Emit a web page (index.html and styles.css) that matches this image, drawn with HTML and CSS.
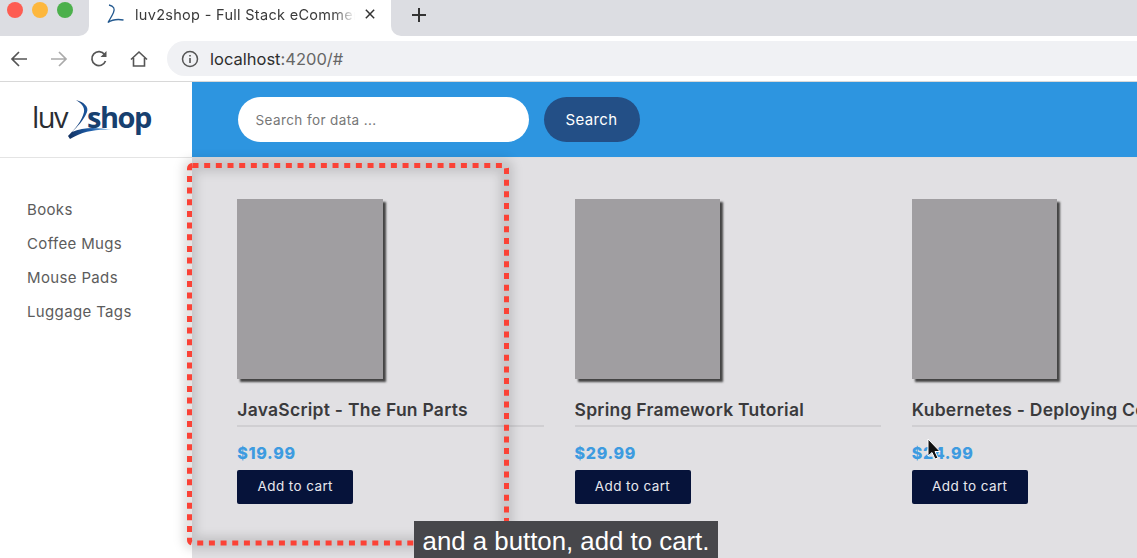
FILE: index.html
```html
<!DOCTYPE html>
<html lang="en">
<head>
  <meta charset="UTF-8" />
  <title>luv2shop - Full Stack eCommerce</title>
  <link rel="stylesheet" href="styles.css">
</head>
<body>
  <div class="tabbar">
    <div class="tab-left">
      <span class="light red"></span>
      <span class="light yellow"></span>
      <span class="light green"></span>
    </div>
    <div class="tab">
      <svg class="favicon" width="20" height="24" viewBox="0 0 20 24">
        <path d="M4 3C9 4 10 7 8.5 10.5C7 14 5 17 3 20.5C8 17 13 17 18.5 18" fill="none" stroke="#23598f" stroke-width="1.3"/>
      </svg>
      <span class="tab-title">luv2shop - Full Stack eCommerce</span>
      <svg class="tab-close" width="12" height="12" viewBox="0 0 12 12">
        <path d="M1 1L11 11M11 1L1 11" stroke="#333" stroke-width="1.8"/>
      </svg>
    </div>
    <div class="tab-right">
      <svg class="new-tab" width="16" height="16" viewBox="0 0 16 16">
        <path d="M8 1V15M1 8H15" stroke="#333" stroke-width="2"/>
      </svg>
    </div>
  </div>

  <div class="toolbar">
    <svg class="tool" width="18" height="18" viewBox="0 0 18 18">
      <path d="M17 9H2M9 2L2 9L9 16" fill="none" stroke="#555" stroke-width="1.7"/>
    </svg>
    <svg class="tool" width="18" height="18" viewBox="0 0 18 18">
      <path d="M1 9H16M9 2L16 9L9 16" fill="none" stroke="#aaa" stroke-width="1.7"/>
    </svg>
    <svg class="tool" width="18" height="18" viewBox="0 0 18 18">
      <path d="M15.5 11A7 7 0 1 1 14.6 4.5" fill="none" stroke="#555" stroke-width="1.7"/>
      <path d="M16.5 1V7H10.5Z" fill="#555"/>
    </svg>
    <svg class="tool" width="18" height="18" viewBox="0 0 18 18">
      <path d="M1 9.5L9 2L17 9.5M3.5 8V16H14.5V8" fill="none" stroke="#555" stroke-width="1.6"/>
    </svg>
    <div class="address">
      <svg width="18" height="18" viewBox="0 0 18 18">
        <circle cx="9" cy="9" r="7.5" fill="none" stroke="#555" stroke-width="1.5"/>
        <path d="M9 8V13M9 5V6.6" stroke="#555" stroke-width="1.6"/>
      </svg>
      <span class="url">localhost<span class="url-rest">:4200/#</span></span>
    </div>
  </div>

  <div class="app">
    <aside class="sidebar">
      <div class="brand">
        <span class="logo">
          <span class="logo-luv">luv</span><svg class="logo-two" width="22" height="42" viewBox="0 0 22 42">
            <defs>
              <linearGradient id="swoosh" x1="0" y1="0" x2="1" y2="0">
                <stop offset="0" stop-color="#12305f"/>
                <stop offset="0.5" stop-color="#1c5ca8"/>
                <stop offset="1" stop-color="#8cc2ea"/>
              </linearGradient>
            </defs>
            <path d="M9 1C17 3 22 8 20 13C17 21 10 28 5 33C16 28 30 28 45 31C30 30 16 32 3 40L1 37C8 30 15 22 17 13C18 8 14 4 9 1Z" fill="url(#swoosh)"/>
          </svg><span class="logo-shop">shop</span>
        </span>
      </div>
      <ul class="menu">
        <li>Books</li>
        <li>Coffee Mugs</li>
        <li>Mouse Pads</li>
        <li>Luggage Tags</li>
      </ul>
    </aside>

    <div class="content">
      <header class="topnav">
        <input class="search-input" type="text" placeholder="Search for data ..." />
        <button class="search-btn">Search</button>
      </header>
      <main class="products">
        <div class="product">
          <div class="cover"></div>
          <h3>JavaScript - The Fun Parts</h3>
          <div class="price">$19.99</div>
          <button class="cart-btn">Add to cart</button>
        </div>
        <div class="product">
          <div class="cover"></div>
          <h3>Spring Framework Tutorial</h3>
          <div class="price">$29.99</div>
          <button class="cart-btn">Add to cart</button>
        </div>
        <div class="product">
          <div class="cover"></div>
          <h3>Kubernetes - Deploying Containers</h3>
          <div class="price">$24.99</div>
          <button class="cart-btn">Add to cart</button>
        </div>
      </main>
    </div>
  </div>

  <!-- things drawn over the video frame -->
  <svg class="highlight" width="330" height="390" viewBox="0 0 330 390">
    <rect class="highlight-glow" x="5.5" y="5.5" width="317" height="377.5" rx="3"/>
    <rect class="highlight-dots" x="5.5" y="5.5" width="317" height="377.5" rx="3"/>
  </svg>
  <svg class="cursor" width="16" height="24" viewBox="0 0 16 24">
    <path d="M1 1V18L5 14.5L8 21L11 20L8 13.5H13Z" fill="#111" stroke="#fff" stroke-width="1"/>
  </svg>
  <div class="caption">and a button, add to cart.</div>
</body>
</html>
```

FILE: styles.css
```css
html, body {
  height: 100%;
}
body {
  margin: 0;
  overflow: hidden;
  font-family: Inter, "Noto Sans", sans-serif;
  background: #fff;
  color: #333;
}

/* browser chrome */
.tabbar {
  display: flex;
  height: 36px;
  background: #fff;
}
.tab-left {
  display: flex;
  gap: 9px;
  width: 89px;
  box-sizing: border-box;
  padding: 2px 0 0 7px;
  background: #dcdde2;
  border-bottom-right-radius: 10px;
}
.light {
  width: 16px;
  height: 16px;
  border-radius: 50%;
}
.red { background: #fd5d52; }
.yellow { background: #fdb73d; }
.green { background: #4cb04c; }
.tab {
  display: flex;
  align-items: center;
  width: 302px;
  box-sizing: border-box;
  padding: 0 16px 8px 16px;
}
.favicon {
  flex: none;
  margin-right: 10px;
}
.tab-title {
  width: 220px;
  flex: none;
  overflow: hidden;
  white-space: nowrap;
  font-size: 14.5px;
  letter-spacing: 0.3px;
  color: #3a3a3a;
  -webkit-mask-image: linear-gradient(to right, #000 90%, transparent);
  mask-image: linear-gradient(to right, #000 90%, transparent);
}
.tab-close {
  margin-left: 10px;
}
.tab-right {
  flex: 1;
  padding: 7px 0 0 20px;
  background: #dcdde2;
  border-bottom-left-radius: 10px;
}
.toolbar {
  display: flex;
  align-items: center;
  gap: 22px;
  height: 45px;
  padding-left: 10px;
  border-bottom: 1px solid #d8d8d8;
  background: #fff;
}
.toolbar .tool {
  flex: none;
}
.address {
  display: flex;
  align-items: center;
  gap: 11px;
  flex: 1;
  height: 35px;
  margin-left: -3px;
  padding-left: 14px;
  background: #f0f1f4;
  border-radius: 18px 0 0 18px;
}
.url {
  font-size: 16.5px;
  color: #2e2e2e;
}
.url-rest {
  color: #666;
}

/* app */
.app {
  display: flex;
  height: 476px;
}
.sidebar {
  width: 192px;
  flex: none;
  background: #fff;
}
.brand {
  display: flex;
  align-items: center;
  height: 75px;
  padding-left: 32px;
  border-bottom: 1px solid #e4e4e4;
}
.logo {
  display: flex;
  align-items: center;
  font-family: "Open Sans", sans-serif;
  font-size: 29px;
  letter-spacing: -1.5px;
  line-height: 42px;
}
.logo-luv {
  margin-top: -6px;
  font-weight: 500;
  color: #2a2d33;
}
.logo-shop {
  margin-top: -6px;
  margin-left: -2px;
  color: #17406f;
  font-weight: 700;
}
.logo-two {
  overflow: visible;
}
.menu {
  list-style: none;
  margin: 35px 0 0 0;
  padding: 0 0 0 27px;
  font-size: 15px;
  letter-spacing: 0.35px;
  color: #5c5c5c;
}
.menu li {
  height: 34px;
  line-height: 34px;
}
.content {
  flex: 1;
  min-width: 0;
  display: flex;
  flex-direction: column;
  background: #e1e0e3;
}
.topnav {
  display: flex;
  align-items: center;
  gap: 15px;
  height: 75px;
  flex: none;
  padding-left: 45.5px;
  background: #2d95e0;
  border-bottom: 1px solid #dedee0;
}
.search-input {
  width: 291px;
  height: 45px;
  box-sizing: border-box;
  padding: 0 18px;
  border: none;
  border-radius: 23px;
  font-family: inherit;
  font-size: 13.5px;
  letter-spacing: 0.4px;
  background: #fff;
}
.search-input::placeholder {
  color: #777;
}
.search-btn {
  width: 96px;
  height: 45px;
  border: none;
  border-radius: 23px;
  background: #234f86;
  color: #fff;
  font-family: inherit;
  font-size: 15px;
  letter-spacing: 0.4px;
}
.products {
  display: grid;
  grid-template-columns: repeat(3, 306.75px);
  gap: 30.5px;
  padding: 41px 0 0 45.25px;
  overflow: hidden;
}
.product {
  min-width: 0;
}
.cover {
  width: 145.5px;
  height: 180px;
  background: #a09ea1;
  box-shadow: 3px 3px 2px #444;
}
.product h3 {
  margin: 19px 0 0 0;
  height: 27px;
  line-height: 24px;
  font-size: 17.5px;
  font-weight: 600;
  letter-spacing: 0.25px;
  color: #3a3a3c;
  white-space: nowrap;
  border-bottom: 2px solid #d0cfd2;
}
.price {
  margin-top: 16px;
  font-size: 16px;
  font-weight: 800;
  letter-spacing: 0.7px;
  color: #3d9be0;
  line-height: 20px;
}
.cart-btn {
  display: block;
  margin-top: 7px;
  width: 116px;
  height: 34px;
  padding: 0 0 2px 0;
  border: none;
  border-radius: 2px;
  background: #06133a;
  color: #e8e8ee;
  font-family: inherit;
  font-size: 13.5px;
  letter-spacing: 0.4px;
}

/* overlays from the video */
.highlight {
  position: absolute;
  left: 184px;
  top: 160px;
  overflow: visible;
}
.highlight-glow {
  fill: none;
  stroke: rgba(0, 0, 0, 0.12);
  stroke-width: 14px;
  filter: blur(5px);
}
.highlight-dots {
  fill: none;
  stroke: #fb4236;
  stroke-width: 5px;
  stroke-dasharray: 6 5.67;
}
.cursor {
  position: absolute;
  left: 927px;
  top: 438px;
}
.caption {
  position: absolute;
  left: 414px;
  top: 521px;
  width: 304px;
  height: 37px;
  line-height: 40px;
  text-align: center;
  background: #47474b;
  color: #fff;
  font-family: "Liberation Sans", Arial, sans-serif;
  font-size: 25.8px;
  white-space: nowrap;
}
```
